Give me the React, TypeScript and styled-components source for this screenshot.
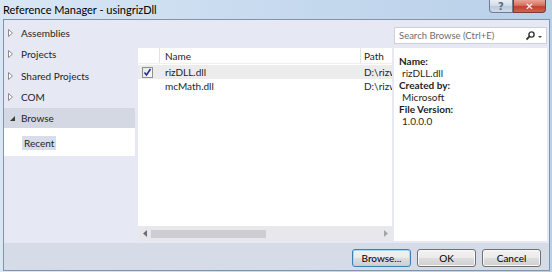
import React from 'react';
import styled, { createGlobalStyle } from 'styled-components';

const GlobalStyle = createGlobalStyle`
  html, body {
    margin: 0;
    padding: 0;
  }
  body {
    width: 552px;
    height: 272px;
    overflow: hidden;
    font-family: Lato, "Noto Sans", sans-serif;
    font-size: 10px;
    color: #1e1e1e;
  }
`;

const Window = styled.div`
  width: 552px;
  height: 272px;
  box-sizing: border-box;
  display: flex;
  flex-direction: column;
  padding: 0 2px 1px 3px;
  background: linear-gradient(90deg, #d9e7f5 0%, #c8dbef 45%, #b9d0e9 100%);
`;

const TitleBar = styled.div`
  height: 19px;
  display: flex;
  justify-content: space-between;
  align-items: flex-start;
`;

const Title = styled.div`
  padding-top: 2px;
  font-size: 11px;
  line-height: 15px;
  color: #000;
`;

const CaptionButtons = styled.div`
  display: flex;
  margin-right: 4px;
`;

const CaptionButton = styled.div<{ $close?: boolean }>`
  width: ${p => (p.$close ? 33 : 24)}px;
  height: 13px;
  box-sizing: border-box;
  border: 1px solid ${p => (p.$close ? '#7e3a33' : '#6e7d92')};
  border-top: none;
  border-radius: ${p => (p.$close ? '0 0 4px 0' : '0 0 0 4px')};
  background: ${p =>
    p.$close
      ? 'linear-gradient(180deg, #e8a598 0%, #d6705f 45%, #c2402c 55%, #d2634f 100%)'
      : 'linear-gradient(180deg, #e8eef5 0%, #d3dde9 45%, #bccadc 55%, #cfdbe8 100%)'};
  display: flex;
  align-items: center;
  justify-content: center;
  font-family: "DejaVu Sans", sans-serif;
  font-weight: bold;
  font-size: 10px;
  color: ${p => (p.$close ? '#fff' : '#5d6b7e')};
`;

const Client = styled.div`
  flex: 1;
  display: flex;
  flex-direction: column;
  border: 1px solid #8393a8;
  background: #e6e9f3;
  min-height: 0;
`;

const Main = styled.div`
  flex: 1;
  display: flex;
  min-height: 0;
`;

const Sidebar = styled.div`
  width: 131px;
  padding-top: 2px;
  display: flex;
  flex-direction: column;
`;

const TreeItem = styled.div<{ $selected?: boolean }>`
  height: ${p => (p.$selected ? 20 : 21.5)}px;
  display: flex;
  align-items: center;
  padding-left: 4px;
  background: ${p => (p.$selected ? '#d4d8e3' : 'transparent')};
`;

const Arrow = styled.span`
  width: 13px;
  display: flex;
  align-items: center;
`;

const RecentArea = styled.div`
  height: 28px;
  background: #fff;
  padding: 8px 0 0 18px;
  box-sizing: border-box;
`;

const RecentChip = styled.span`
  display: inline-block;
  height: 14px;
  line-height: 14px;
  padding: 0 2px;
  background: #d9dde9;
`;

const RightSection = styled.div`
  flex: 1;
  display: flex;
  flex-direction: column;
  margin-left: 3px;
  padding: 0 2px 2px 0;
  min-width: 0;
`;

const TopStrip = styled.div`
  height: 28px;
  display: flex;
  justify-content: flex-end;
  padding-top: 7px;
  box-sizing: border-box;
`;

const SearchBox = styled.div`
  width: 153px;
  height: 17px;
  box-sizing: border-box;
  border: 1px solid #cbd0dc;
  background: #fff;
  display: flex;
  align-items: center;
  padding: 0 3px 0 4px;
  color: #6d6d6d;
`;

const SearchText = styled.span`
  flex: 1;
  font-size: 9.5px;
  line-height: 15px;
`;

const Panels = styled.div`
  flex: 1;
  display: flex;
  gap: 2px;
  min-height: 0;
`;

const ListPanel = styled.div`
  flex: 1;
  background: #fff;
  display: flex;
  flex-direction: column;
  min-width: 0;
  overflow: hidden;
`;

const HeaderRow = styled.div`
  height: 16px;
  display: flex;
  border-bottom: 1px solid #f0f0f0;
  box-sizing: border-box;
`;

const Rows = styled.div`
  flex: 1;
  padding-top: 1px;
`;

const Row = styled.div<{ $shaded?: boolean }>`
  height: 14px;
  display: flex;
  align-items: center;
  background: ${p => (p.$shaded ? '#ececec' : 'transparent')};
`;

const Cell = styled.div<{ $w?: number; $head?: boolean }>`
  ${p => (p.$w ? `width: ${p.$w}px; flex: none;` : 'flex: 1;')}
  box-sizing: border-box;
  height: 100%;
  display: flex;
  align-items: center;
  padding-left: ${p => (p.$w === 22 ? 4 : p.$w ? 5 : 3)}px;
  white-space: nowrap;
  overflow: hidden;
  border-right: ${p => (p.$head && p.$w ? '1px solid #e3e3e3' : 'none')};
`;

const CheckBox = styled.span`
  width: 11px;
  height: 11px;
  box-sizing: border-box;
  border: 1px solid #8f8f8f;
  background: linear-gradient(135deg, #e6e6e6, #fafafa);
  display: flex;
  align-items: center;
  justify-content: center;
`;

const ScrollBar = styled.div`
  height: 15px;
  background: #e8e8ec;
  display: flex;
  align-items: center;
  padding: 0 4px 0 5px;
`;

const Thumb = styled.div`
  width: 115px;
  height: 8px;
  background: #cdcdd3;
  margin-left: 4px;
`;

const Details = styled.div`
  width: 153px;
  background: #fff;
  padding: 7px 0 0 5px;
  box-sizing: border-box;
  line-height: 12px;
`;

const Label = styled.div`
  font-weight: bold;
`;

const Value = styled.div`
  padding-left: 3px;
  color: #2a1f22;
`;

const Footer = styled.div`
  height: 27px;
  background: #d6dbe8;
  display: flex;
  justify-content: flex-end;
  align-items: flex-start;
  gap: 6px;
  padding: 6px 8px 0 0;
  box-sizing: border-box;
`;

const Button = styled.div<{ $default?: boolean }>`
  width: 59px;
  height: 18px;
  box-sizing: border-box;
  border: 1px solid ${p => (p.$default ? '#3c7fb1' : '#707070')};
  border-radius: 3px;
  background: linear-gradient(180deg, #f2f2f2 0%, #ebebeb 48%, #dddddd 52%, #cfcfcf 100%);
  box-shadow: inset 0 0 0 1px ${p => (p.$default ? '#9fdcf6' : '#f8f8f8')};
  display: flex;
  align-items: center;
  justify-content: center;
  color: #000;
`;

const Collapsed = () => (
  <svg width="5" height="8" viewBox="0 0 5 8">
    <path d="M0.5 0.5 L4.5 4 L0.5 7.5 Z" fill="#fff" stroke="#8a8a8a" />
  </svg>
);

const Expanded = () => (
  <svg width="7" height="7" viewBox="0 0 7 7" style={{ marginLeft: 1 }}>
    <path d="M6 1 L6 6 L1 6 Z" fill="#3d3d3d" />
  </svg>
);

const tree = ['Assemblies', 'Projects', 'Shared Projects', 'COM'];

const App: React.FC = () => {
  return (
    <React.Fragment>
      <GlobalStyle />
      <Window>
        <TitleBar>
          <Title>Reference Manager - usingrizDll</Title>
          <CaptionButtons>
            <CaptionButton>?</CaptionButton>
            <CaptionButton $close>✕</CaptionButton>
          </CaptionButtons>
        </TitleBar>
        <Client>
          <Main>
            <Sidebar>
              {tree.map(t => (
                <TreeItem key={t}>
                  <Arrow><Collapsed /></Arrow>
                  {t}
                </TreeItem>
              ))}
              <TreeItem $selected>
                <Arrow><Expanded /></Arrow>
                Browse
              </TreeItem>
              <RecentArea>
                <RecentChip>Recent</RecentChip>
              </RecentArea>
            </Sidebar>
            <RightSection>
              <TopStrip>
                <SearchBox>
                  <SearchText>Search Browse (Ctrl+E)</SearchText>
                  <svg width="18" height="10" viewBox="0 0 18 10">
                    <circle cx="6.5" cy="3.5" r="2.6" fill="none" stroke="#333" strokeWidth="1.4" />
                    <path d="M4.6 5.4 L1.5 8.5" stroke="#333" strokeWidth="1.8" />
                    <path d="M13 5 L17 5 L15 7 Z" fill="#444" />
                  </svg>
                </SearchBox>
              </TopStrip>
              <Panels>
                <ListPanel>
                  <HeaderRow>
                    <Cell $w={22} $head />
                    <Cell $w={201} $head>Name</Cell>
                    <Cell $head>Path</Cell>
                  </HeaderRow>
                  <Rows>
                    <Row $shaded>
                      <Cell $w={22}>
                        <CheckBox>
                          <svg width="9" height="9" viewBox="0 0 9 9">
                            <path d="M1.5 4.5 L3.5 7 L7.5 1" fill="none" stroke="#1f2a8c" strokeWidth="1.5" />
                          </svg>
                        </CheckBox>
                      </Cell>
                      <Cell $w={201}>rizDLL.dll</Cell>
                      <Cell>D:\rizw</Cell>
                    </Row>
                    <Row>
                      <Cell $w={22} />
                      <Cell $w={201}>mcMath.dll</Cell>
                      <Cell>D:\rizw</Cell>
                    </Row>
                  </Rows>
                  <ScrollBar>
                    <svg width="4" height="7" viewBox="0 0 4 7">
                      <path d="M4 0 L0 3.5 L4 7 Z" fill="#6b6e78" />
                    </svg>
                    <Thumb />
                    <div style={{ flex: 1 }} />
                    <svg width="4" height="7" viewBox="0 0 4 7">
                      <path d="M0 0 L4 3.5 L0 7 Z" fill="#a4a6ae" />
                    </svg>
                  </ScrollBar>
                </ListPanel>
                <Details>
                  <Label>Name:</Label>
                  <Value>rizDLL.dll</Value>
                  <Label>Created by:</Label>
                  <Value>Microsoft</Value>
                  <Label>File Version:</Label>
                  <Value>1.0.0.0</Value>
                </Details>
              </Panels>
            </RightSection>
          </Main>
          <Footer>
            <Button $default>Browse...</Button>
            <Button>OK</Button>
            <Button>Cancel</Button>
          </Footer>
        </Client>
      </Window>
    </React.Fragment>
  );
};

export default App;
